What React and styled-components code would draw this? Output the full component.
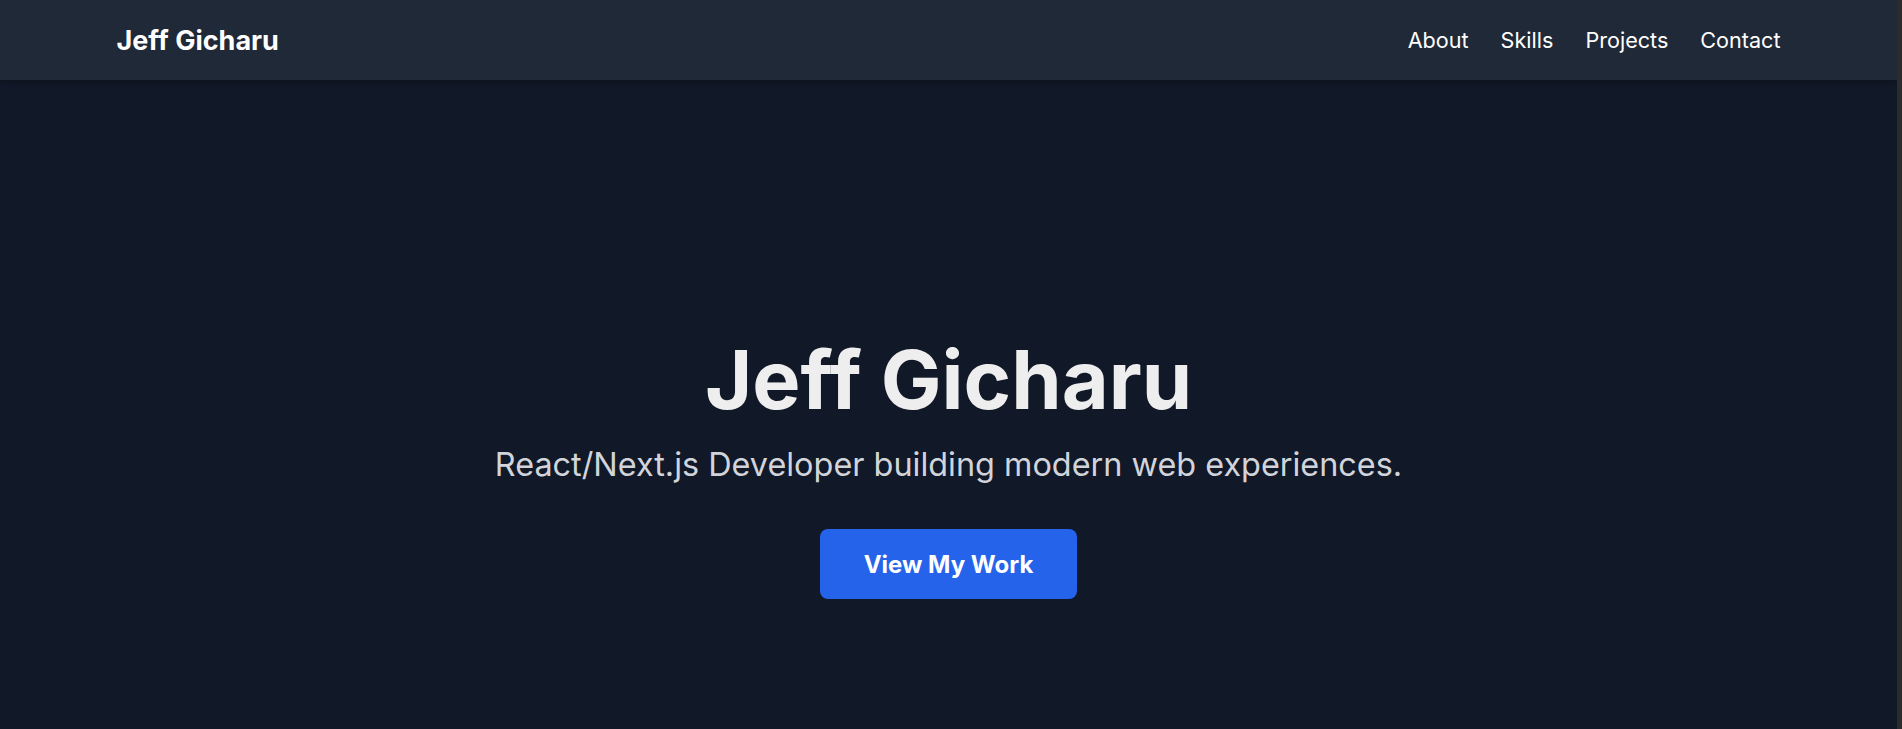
import React from 'react';
import styled, { createGlobalStyle } from 'styled-components';

const GlobalStyle = createGlobalStyle`
  * {
    box-sizing: border-box;
  }
  html, body {
    margin: 0;
    padding: 0;
    background-color: #111827;
    font-family: Inter, 'Noto Sans', sans-serif;
    color: #f3f4f6;
  }
  body {
    /* stands in for the thin browser scrollbar seen in the screenshot */
    border-right: 5px solid #2c2c2c;
  }
`;

const Header = styled.header`
  background-color: #1f2937;
  height: 80px;
  box-shadow: 0 2px 6px rgba(0, 0, 0, 0.25);
`;

const HeaderInner = styled.div`
  max-width: 1664px;
  height: 100%;
  margin: 0 auto;
  display: flex;
  align-items: center;
  justify-content: space-between;
`;

const Logo = styled.a`
  font-size: 27px;
  font-weight: 700;
  color: #ffffff;
  text-decoration: none;
`;

const Nav = styled.nav`
  display: flex;
  align-items: center;
  gap: 32px;
`;

const NavLink = styled.a`
  font-size: 21.6px;
  color: #ffffff;
  text-decoration: none;
`;

const Hero = styled.section`
  min-height: 775px;
  display: flex;
  flex-direction: column;
  align-items: center;
  justify-content: center;
  text-align: center;
`;

const Title = styled.h1`
  margin: 0;
  font-size: 81px;
  font-weight: 700;
  line-height: 89px;
  color: #eeeeee;
`;

const Subtitle = styled.p`
  margin: 20px 0 0;
  font-size: 32.4px;
  line-height: 39px;
  color: #d1d5db;
`;

const CTA = styled.a`
  margin-top: 45px;
  display: inline-flex;
  align-items: center;
  justify-content: center;
  width: 257px;
  height: 70px;
  border-radius: 8px;
  background-color: #2563eb;
  color: #ffffff;
  font-size: 24px;
  font-weight: 700;
  text-decoration: none;
`;

export default function App() {
  return (
    <>
      <GlobalStyle />
      <Header>
        <HeaderInner>
          <Logo href='#'>Jeff Gicharu</Logo>
          <Nav>
            <NavLink href='#about'>About</NavLink>
            <NavLink href='#skills'>Skills</NavLink>
            <NavLink href='#projects'>Projects</NavLink>
            <NavLink href='#contact'>Contact</NavLink>
          </Nav>
        </HeaderInner>
      </Header>
      <Hero>
        <Title>Jeff Gicharu</Title>
        <Subtitle>React/Next.js Developer building modern web experiences.</Subtitle>
        <CTA href='#projects'>View My Work</CTA>
      </Hero>
    </>
  );
}
